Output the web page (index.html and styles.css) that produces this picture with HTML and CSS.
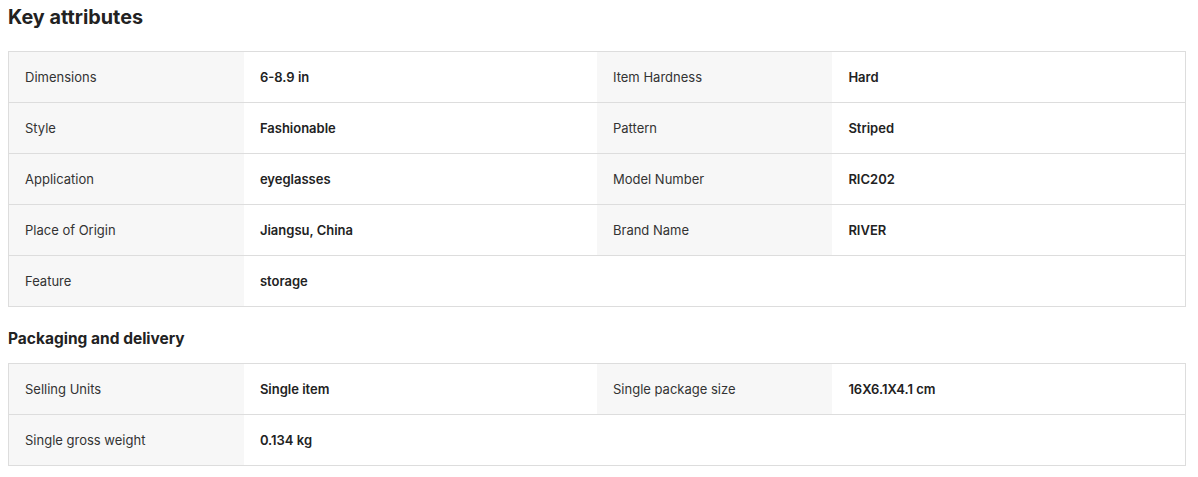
FILE: index.html
```html
<!DOCTYPE html>
<html>
<head>
<meta charset="utf-8">
<link rel="stylesheet" href="styles.css">
</head>
<body>
<section class="attrs">
  <h2 class="title">Key attributes</h2>
  <table class="grid">
    <colgroup><col class="c-label"><col class="c-value"><col class="c-label"><col class="c-value"></colgroup>
    <tr><td class="label">Dimensions</td><td class="value">6-8.9 in</td><td class="label">Item Hardness</td><td class="value">Hard</td></tr>
    <tr><td class="label">Style</td><td class="value">Fashionable</td><td class="label">Pattern</td><td class="value">Striped</td></tr>
    <tr><td class="label">Application</td><td class="value">eyeglasses</td><td class="label">Model Number</td><td class="value">RIC202</td></tr>
    <tr><td class="label">Place of Origin</td><td class="value">Jiangsu, China</td><td class="label">Brand Name</td><td class="value">RIVER</td></tr>
    <tr><td class="label">Feature</td><td class="value">storage</td><td class="empty"></td><td class="empty"></td></tr>
  </table>
  <h3 class="subtitle">Packaging and delivery</h3>
  <table class="grid">
    <colgroup><col class="c-label"><col class="c-value"><col class="c-label"><col class="c-value"></colgroup>
    <tr><td class="label">Selling Units</td><td class="value">Single item</td><td class="label">Single package size</td><td class="value">16X6.1X4.1 cm</td></tr>
    <tr><td class="label">Single gross weight</td><td class="value">0.134 kg</td><td class="empty"></td><td class="empty"></td></tr>
  </table>
</section>
</body>
</html>
```
FILE: styles.css
```css
html, body {
  margin: 0;
  padding: 0;
  background: #fff;
}
body {
  padding: 0 12px 0 8px;
  font-family: Inter, "Noto Sans", sans-serif;
  color: #222;
}
.title {
  margin: 0;
  padding-top: 3px;
  height: 51px;
  box-sizing: border-box;
  font-size: 19.8px;
  line-height: 28px;
  font-weight: 700;
  color: #222;
}
.subtitle {
  margin: 0;
  height: 56px;
  padding-top: 21px;
  box-sizing: border-box;
  font-size: 15.5px;
  line-height: 22px;
  font-weight: 700;
  color: #222;
}
.grid {
  width: 100%;
  border-collapse: collapse;
  table-layout: fixed;
  border: 1px solid #ddd;
}
.c-label { width: 20%; }
.c-value { width: 30%; }
.grid td {
  height: 50px;
  padding: 0 16px;
  border-top: 1px solid #ddd;
  border-bottom: 1px solid #ddd;
  font-size: 13px;
  vertical-align: middle;
}
.label {
  background: #f7f7f7;
  color: #333;
  font-weight: 400;
}
.value {
  background: #fff;
  color: #222;
  font-weight: 600;
}
```
